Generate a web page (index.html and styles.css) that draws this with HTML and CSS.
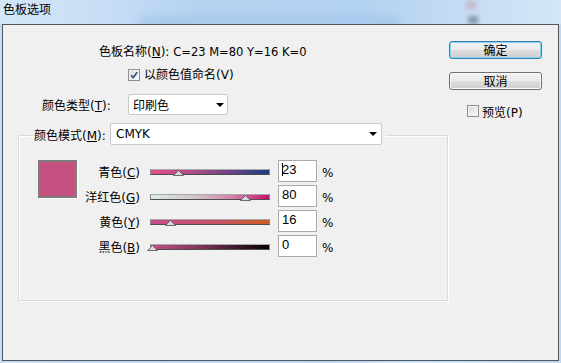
FILE: index.html
```html
<!DOCTYPE html>
<html lang="zh-CN">
<head>
<meta charset="utf-8">
<title>色板选项</title>
<link rel="stylesheet" href="styles.css">
</head>
<body>
<div class="titlebar">
  <span class="title">色板选项</span>
  <div class="tb-glow"></div>
  <div class="tb-icon tb-icon-a"></div>
  <div class="tb-icon tb-icon-b"></div>
</div>
<div class="dialog">
  <div class="main">
    <div class="name-row">色板名称(<u>N</u>): <span class="latin">C=23 M=80 Y=16 K=0</span></div>
    <div class="check-row">
      <span class="checkbox"><svg viewBox="0 0 10 10" width="10" height="10"><path d="M2 5.2 L4.2 7.6 L8.2 2.2" fill="none" stroke="#3d5287" stroke-width="1.7"/></svg></span>
      <span>以颜色值命名(V)</span>
    </div>
    <div class="type-row">
      <span class="type-label">颜色类型(<u>T</u>):</span>
      <div class="select select-type"><span>印刷色</span><span class="arrow"></span></div>
    </div>
    <div class="group">
      <div class="group-head">
        <span class="mode-label">颜色模式(<u>M</u>):</span>
        <div class="select select-mode"><span class="latin12">CMYK</span><span class="arrow"></span></div>
      </div>
      <div class="group-body">
        <div class="swatch"></div>
        <div class="sliders">
          <span class="slabel">青色(<u>C</u>)</span>
          <div class="slider cyan"><svg class="thumb" style="left: calc(23% - 5px)" viewBox="0 0 11 6" width="11" height="6"><path d="M5.5 0.5 L10.5 5.5 L0.5 5.5 Z" fill="#d9d9d9" stroke="#6b6b6b"/></svg></div>
          <div class="num"><span class="caret"></span>23</div>
          <span class="pct">%</span>

          <span class="slabel">洋红色(<u>G</u>)</span>
          <div class="slider magenta"><svg class="thumb" style="left: calc(80% - 5px)" viewBox="0 0 11 6" width="11" height="6"><path d="M5.5 0.5 L10.5 5.5 L0.5 5.5 Z" fill="#d9d9d9" stroke="#6b6b6b"/></svg></div>
          <div class="num">80</div>
          <span class="pct">%</span>

          <span class="slabel">黄色(<u>Y</u>)</span>
          <div class="slider yellow"><svg class="thumb" style="left: calc(16% - 5px)" viewBox="0 0 11 6" width="11" height="6"><path d="M5.5 0.5 L10.5 5.5 L0.5 5.5 Z" fill="#d9d9d9" stroke="#6b6b6b"/></svg></div>
          <div class="num">16</div>
          <span class="pct">%</span>

          <span class="slabel">黑色(<u>B</u>)</span>
          <div class="slider black"><svg class="thumb" style="left: calc(0% - 4px)" viewBox="0 0 11 6" width="11" height="6"><path d="M5.5 0.5 L10.5 5.5 L0.5 5.5 Z" fill="#d9d9d9" stroke="#6b6b6b"/></svg></div>
          <div class="num">0</div>
          <span class="pct">%</span>
        </div>
      </div>
    </div>
  </div>
  <div class="side">
    <div class="btn btn-default">确定</div>
    <div class="btn">取消</div>
    <div class="preview-row">
      <span class="checkbox"></span>
      <span>预览(P)</span>
    </div>
  </div>
</div>
</body>
</html>
```
FILE: styles.css
```css
* { box-sizing: border-box; }
html, body {
  margin: 0;
  padding: 0;
}
body {
  width: 561px;
  height: 363px;
  overflow: hidden;
  background: linear-gradient(90deg, #c4dcf4 0%, #bcd6f1 60%, #d0e3f6 75%, #c0d8f1 100%);
  font-family: "DejaVu Sans", "Noto Sans CJK SC", sans-serif;
  font-size: 12px;
  color: #000;
}
u { text-underline-offset: 1px; }

.titlebar {
  position: relative;
  height: 24px;
  padding-left: 3px;
  line-height: 17px;
  background: linear-gradient(90deg, #d5e7f9 0%, #c6ddf5 20%, #b5d2f0 35%, #b3d1f0 65%, #c4dbf4 80%, #d4e6f8 100%);
  overflow: hidden;
}
.title {
  position: relative;
  z-index: 1;
  font-family: "Noto Sans CJK SC", sans-serif;
}
.tb-glow {
  position: absolute;
  left: 140px;
  top: 17px;
  width: 260px;
  height: 10px;
  background: #a6c6ea;
  filter: blur(4px);
}
.tb-icon {
  position: absolute;
  background: #b8bcc6;
  filter: blur(2px);
  opacity: 0.7;
}
.tb-icon-a { left: 466px; top: 1px; width: 10px; height: 8px; background: #c9a8b8; }
.tb-icon-b { left: 468px; top: 16px; width: 10px; height: 8px; background: #6e7a88; }

.dialog {
  display: flex;
  margin-left: 2px;
  width: 557px;
  height: 337px;
  border: 1px solid #4f5763;
  background: #f0f0f0;
}
.main {
  width: 446px;
  flex: none;
}
.latin { font-size: 11.5px; }
.latin12 { font-size: 12px; }

.name-row {
  margin-top: 20px;
  padding-left: 96px;
  height: 14px;
  line-height: 14px;
  white-space: nowrap;
}
.check-row {
  display: flex;
  align-items: center;
  gap: 4px;
  margin-top: 10px;
  padding-left: 125px;
  height: 12px;
  line-height: 12px;
}
.checkbox {
  display: flex;
  align-items: center;
  justify-content: center;
  width: 12px;
  height: 12px;
  border: 1px solid #8e8f8f;
  background: linear-gradient(135deg, #d8d8d8 0%, #eeeeee 60%, #fafafa 100%);
  box-shadow: inset 0 0 0 1px #f4f4f4;
  flex: none;
}
.type-row {
  display: flex;
  align-items: center;
  margin-top: 13px;
  padding-left: 39px;
  height: 21px;
}
.type-label { width: 86px; }

.select {
  display: flex;
  align-items: center;
  justify-content: space-between;
  background: #fff;
  border: 1px solid #c9c9c9;
  border-radius: 2px;
  padding: 0 4px 0 4px;
}
.select-type { width: 100px; height: 21px; padding-right: 3px; }
.select-mode { width: 272px; height: 22px; padding-left: 5px; padding-right: 4px; }
.arrow {
  width: 0;
  height: 0;
  border-left: 4px solid transparent;
  border-right: 4px solid transparent;
  border-top: 4px solid #000;
}

.group {
  margin-top: 20px;
  margin-left: 15px;
  width: 430px;
  height: 166px;
  border: 1px solid #d3dde6;
  box-shadow: inset 1px 1px 0 #ffffff, 1px 1px 0 #ffffff;
}
.group-head {
  display: flex;
  align-items: center;
  margin-top: -13px;
  margin-left: 14px;
  width: 353px;
  height: 22px;
  background: #f0f0f0;
}
.mode-label { width: 77px; padding-left: 1px; }

.group-body {
  display: flex;
  margin-top: 15px;
  padding-left: 19px;
}
.swatch {
  width: 39px;
  height: 38px;
  border: 2px solid #7d7d7d;
  background: #c45180;
  box-shadow: 1px 1px 0 #ffffff;
  flex: none;
}
.sliders {
  display: grid;
  grid-template-columns: 73px 128px 44px auto;
  grid-auto-rows: 22px;
  row-gap: 3px;
  align-items: center;
}
.slabel {
  text-align: right;
  padding-right: 10px;
  white-space: nowrap;
}
.slider {
  position: relative;
  width: 120px;
  height: 6px;
  margin-top: 2px;
  border: 1px solid #8a8a8a;
  border-top-color: #a8a8a8;
  border-bottom-color: #4e4e4e;
}
.slider.cyan { background: linear-gradient(90deg, #e44f8a 0%, #b04c86 35%, #6f4585 65%, #183e82 100%); }
.slider.magenta { background: linear-gradient(90deg, #d6ede6 0%, #d5bfc8 40%, #d27fa6 70%, #c8106e 100%); }
.slider.yellow { background: linear-gradient(90deg, #c44f8a 0%, #c5525f 60%, #cb5a24 100%); }
.slider.black { background: linear-gradient(90deg, #c4508a 0%, #80365c 40%, #3a1428 75%, #050004 100%); }
.thumb {
  position: absolute;
  top: 0px;
  display: block;
}
.num {
  width: 39px;
  height: 22px;
  background: #fff;
  border: 1px solid #a9a9a9;
  padding-left: 3px;
  font-family: "Liberation Sans", sans-serif;
  font-size: 13px;
  line-height: 17px;
}
.caret {
  display: inline-block;
  width: 0;
  height: 13px;
  border-left: 1px solid #000;
  vertical-align: -2px;
  margin-right: -1px;
}
.pct {
  padding-top: 4px;
  font-size: 12px;
}

.side {
  flex: 1;
  padding-top: 16px;
}
.btn {
  width: 93px;
  height: 18px;
  border: 1px solid #707070;
  border-radius: 3px;
  background: linear-gradient(#f3f3f3 0%, #ebebeb 48%, #dddddd 52%, #cfcfcf 100%);
  box-shadow: inset 0 0 0 1px #fbfbfb;
  text-align: center;
  line-height: 16px;
  font-family: "Noto Sans CJK SC", sans-serif;
  font-size: 12px;
}
.btn + .btn { margin-top: 13px; }
.btn-default {
  border-color: #3c7fb1;
  box-shadow: inset 0 0 0 1px #7fd3f5;
}
.preview-row {
  display: flex;
  align-items: center;
  gap: 3px;
  margin-top: 15px;
  padding-left: 18px;
  height: 12px;
}
```
